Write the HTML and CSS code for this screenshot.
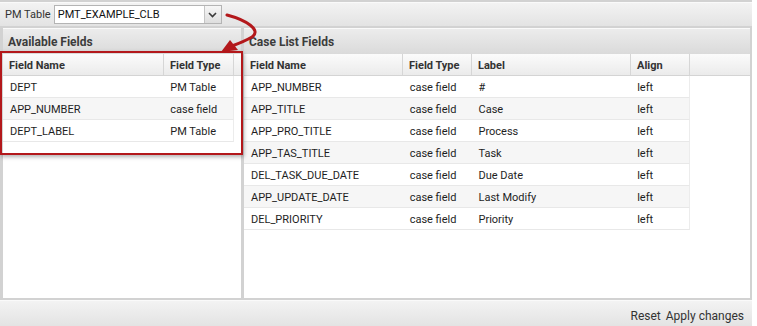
FILE: index.html
```html
<!DOCTYPE html>
<html lang="en">
  <head>
    <meta charset="UTF-8" />
    <title>Case List Setup</title>
    <link rel="stylesheet" href="styles.css">
  </head>
  <body>
    <div class="app">
      <div class="toolbar top-bar">
        <span class="tb-label">PM Table</span>
        <div class="combo">
          <span class="combo-text">PMT_EXAMPLE_CLB</span>
          <span class="combo-btn">
            <svg width="9" height="6" viewBox="0 0 9 6"><path d="M1 1 L4.5 4.5 L8 1" fill="none" stroke="#3a3a3a" stroke-width="1.6"/></svg>
          </span>
        </div>
      </div>

      <div class="panels">
        <div class="panel panel-left">
          <div class="panel-title">Available Fields</div>
          <div class="grid-head">
            <div class="hcell" style="width: 161px">Field Name</div>
            <div class="hcell" style="width: 70px">Field Type</div>
            <div class="hcell filler"></div>
          </div>
          <div class="grid-body">
            <div class="row left-row">
              <div class="cell" style="width: 161px">DEPT</div>
              <div class="cell" style="width: 70px">PM Table</div>
            </div>
            <div class="row left-row alt">
              <div class="cell" style="width: 161px">APP_NUMBER</div>
              <div class="cell" style="width: 70px">case field</div>
            </div>
            <div class="row left-row">
              <div class="cell" style="width: 161px">DEPT_LABEL</div>
              <div class="cell" style="width: 70px">PM Table</div>
            </div>
          </div>
        </div>

        <div class="panel panel-right">
          <div class="panel-title">Case List Fields</div>
          <div class="grid-head">
            <div class="hcell" style="width: 159px">Field Name</div>
            <div class="hcell" style="width: 69px">Field Type</div>
            <div class="hcell" style="width: 159px">Label</div>
            <div class="hcell" style="width: 59px">Align</div>
            <div class="hcell filler"></div>
          </div>
          <div class="grid-body" id="case-rows"></div>
        </div>
      </div>

      <div class="toolbar bottom-bar">
        <span class="tb-btn">Reset</span>
        <span class="tb-btn">Apply changes</span>
      </div>

      <!-- annotation over the grid -->
      <div class="annot-box"></div>
      <svg class="annot-arrow" width="80" height="60" viewBox="200 0 80 60">
        <path d="M227 15 C 246 20, 262 30, 252 37 C 247 40, 240 43, 232 46" fill="none" stroke="#b3181b" stroke-width="3" stroke-linecap="round"/>
        <polygon points="221,52 230,40 238,50" fill="#b3181b"/>
      </svg>
    </div>

    <script>
      const fields = [
        ['APP_NUMBER', 'case field', '#', 'left'],
        ['APP_TITLE', 'case field', 'Case', 'left'],
        ['APP_PRO_TITLE', 'case field', 'Process', 'left'],
        ['APP_TAS_TITLE', 'case field', 'Task', 'left'],
        ['DEL_TASK_DUE_DATE', 'case field', 'Due Date', 'left'],
        ['APP_UPDATE_DATE', 'case field', 'Last Modify', 'left'],
        ['DEL_PRIORITY', 'case field', 'Priority', 'left'],
      ];
      const widths = [159, 69, 159, 59];
      const body = document.getElementById('case-rows');

      fields.forEach((f, i) => {
        const row = document.createElement('div');
        row.className = 'row right-row' + (i % 2 ? ' alt' : '');
        f.forEach((text, c) => {
          const cell = document.createElement('div');
          cell.className = 'cell';
          cell.style.width = widths[c] + 'px';
          cell.textContent = text;
          row.appendChild(cell);
        });
        body.appendChild(row);
      });
    </script>
  </body>
</html>
```

FILE: styles.css
```css
body {
  margin: 0;
  background: #fff;
  font-family: Roboto, 'Liberation Sans', Arial, sans-serif;
  font-size: 11px;
  color: #1e1e1e;
}
.app {
  position: relative;
  width: 752px;
  height: 326px;
  background: #d2d2d2;
  display: flex;
  flex-direction: column;
  overflow: hidden;
}
.toolbar {
  display: flex;
  align-items: center;
  border-top: 1px solid #fafafa;
  background: linear-gradient(#f3f3f3, #e3e3e3);
}
.top-bar {
  margin-top: 2px;
  height: 23px;
  padding-left: 5px;
  gap: 3px;
}
.tb-label {
  color: #333;
}
.combo {
  display: flex;
  width: 168px;
  height: 19px;
  box-sizing: border-box;
  border: 1px solid #b4b4b4;
  background: #fff;
}
.combo-text {
  flex: 1;
  padding-left: 3px;
  line-height: 17px;
  color: #111;
}
.combo-btn {
  width: 16px;
  display: flex;
  align-items: center;
  justify-content: center;
  border-left: 1px solid #c4c4c4;
  background: linear-gradient(#f6f6f6, #dedede);
}
.panels {
  display: flex;
  gap: 3px;
  margin-top: 2px;
  padding: 0 2px 0 3px;
  height: 270px;
}
.panel {
  background: #fff;
  border-top: 1px solid #fafafa;
  display: flex;
  flex-direction: column;
}
.panel-left {
  width: 238px;
}
.panel-right {
  flex: 1;
}
.panel-title {
  height: 25px;
  line-height: 26px;
  padding-left: 5px;
  font-size: 12px;
  font-weight: bold;
  color: #3c3c3c;
  background: linear-gradient(#ececec, #dadada);
}
.grid-head {
  display: flex;
  height: 21px;
  border-bottom: 1px solid #d4d4d4;
  background: linear-gradient(#fbfbfb, #ebebeb);
}
.hcell {
  box-sizing: border-box;
  padding-left: 6px;
  padding-top: 1px;
  line-height: 21px;
  font-weight: bold;
  color: #333;
  border-right: 1px solid #d6d6d6;
}
.hcell.filler {
  flex: 1;
  border-right: none;
}
.row {
  display: flex;
  height: 21px;
  border-bottom: 1px solid #e8e8e8;
  border-right: 1px solid #ececec;
  background: #fff;
}
.row.alt {
  background: #f6f6f6;
}
.left-row {
  width: 230px;
}
.right-row {
  width: 445px;
}
.cell {
  box-sizing: border-box;
  padding-left: 7px;
  padding-top: 1px;
  line-height: 21px;
  white-space: nowrap;
}
.bottom-bar {
  margin-top: 2px;
  height: 25px;
  justify-content: flex-end;
  gap: 5px;
  padding-right: 8px;
}
.tb-btn {
  font-size: 12px;
  color: #333;
  padding-top: 4px;
}
.annot-box {
  position: absolute;
  left: 0;
  top: 51px;
  width: 239px;
  height: 100px;
  border: 2px solid #b3181b;
  box-shadow: 1px 2px 4px rgba(0, 0, 0, 0.3);
}
.annot-arrow {
  position: absolute;
  left: 200px;
  top: 0;
}
```
